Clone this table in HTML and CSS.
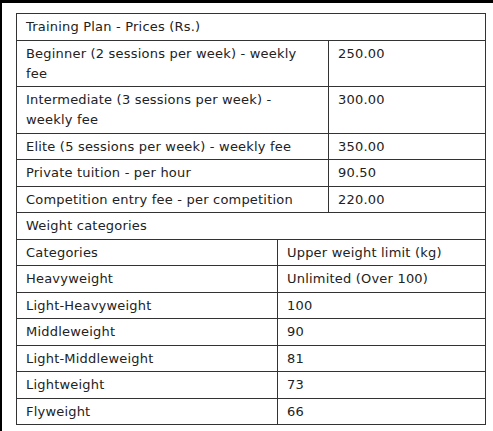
FILE: index.html
```html
<!DOCTYPE html>
<html>
<head>
<meta charset="utf-8">
<link rel="stylesheet" href="styles.css">
</head>
<body>
<div class="frame">
  <table class="plan">
    <colgroup>
      <col class="col-a">
      <col class="col-b">
      <col class="col-c">
    </colgroup>
    <tr><td colspan="3">Training Plan - Prices (Rs.)</td></tr>
    <tr><td colspan="2">Beginner (2 sessions per week) - weekly fee</td><td>250.00</td></tr>
    <tr><td colspan="2">Intermediate (3 sessions per week) - weekly fee</td><td>300.00</td></tr>
    <tr><td colspan="2">Elite (5 sessions per week) - weekly fee</td><td>350.00</td></tr>
    <tr><td colspan="2">Private tuition - per hour</td><td>90.50</td></tr>
    <tr><td colspan="2">Competition entry fee - per competition</td><td>220.00</td></tr>
    <tr><td colspan="3">Weight categories</td></tr>
    <tr><td>Categories</td><td colspan="2">Upper weight limit (kg)</td></tr>
    <tr><td>Heavyweight</td><td colspan="2">Unlimited (Over 100)</td></tr>
    <tr><td>Light-Heavyweight</td><td colspan="2">100</td></tr>
    <tr><td>Middleweight</td><td colspan="2">90</td></tr>
    <tr><td>Light-Middleweight</td><td colspan="2">81</td></tr>
    <tr><td>Lightweight</td><td colspan="2">73</td></tr>
    <tr><td>Flyweight</td><td colspan="2">66</td></tr>
  </table>
</div>
</body>
</html>
```

FILE: styles.css
```css
html, body {
  margin: 0;
  padding: 0;
  background: #fff;
}
.frame {
  box-sizing: border-box;
  height: 431px;
  border-top: 3px solid #000;
  border-left: 2px solid #000;
  padding: 10px 0 0 14px;
}
.plan {
  border-collapse: collapse;
  table-layout: fixed;
  width: 469px;
  font-family: "DejaVu Sans", Verdana, sans-serif;
  font-size: 13px;
  letter-spacing: 0.2px;
  color: #222;
  border: 1px solid #888;
}
.col-a { width: 261px; }
.col-b { width: 51px; }
.col-c { width: 157px; }
.plan td {
  border: 1px solid #333;
  padding: 3px 10px 2.5px 9px;
  line-height: 20px;
  vertical-align: top;
}
```
